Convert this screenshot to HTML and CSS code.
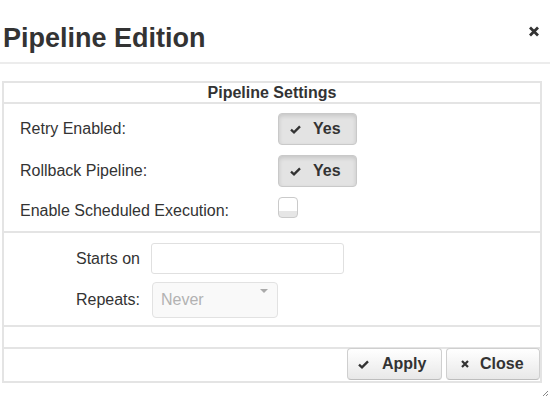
FILE: index.html
```html
<!DOCTYPE html>
<html>
<head>
<meta charset="utf-8">
<link rel="stylesheet" href="styles.css">
</head>
<body>
<div class="dialog">
  <div class="dialog-header">
    <h1 class="title">Pipeline Edition</h1>
    <svg class="close-x" width="12" height="11" viewBox="0 0 12 11"><path d="M2 1.5 L10 9.5 M10 1.5 L2 9.5" stroke="#333" stroke-width="2.8" fill="none"/></svg>
  </div>
  <div class="panel">
    <div class="panel-head">Pipeline Settings</div>
    <div class="settings">
      <div class="row">
        <span class="label">Retry Enabled:</span>
        <button class="toggle"><svg class="ico" width="11" height="9" viewBox="0 0 11 9"><path d="M1 4.6 L4 7.4 L10 1.4" stroke="#333" stroke-width="2.3" fill="none"/></svg><span>Yes</span></button>
      </div>
      <div class="row">
        <span class="label">Rollback Pipeline:</span>
        <button class="toggle"><svg class="ico" width="11" height="9" viewBox="0 0 11 9"><path d="M1 4.6 L4 7.4 L10 1.4" stroke="#333" stroke-width="2.3" fill="none"/></svg><span>Yes</span></button>
      </div>
      <div class="row row-check">
        <span class="label label-check">Enable Scheduled Execution:</span>
        <span class="checkbox"></span>
      </div>
    </div>
    <div class="schedule">
      <span class="slabel">Starts on</span>
      <span class="input"></span>
      <span class="slabel">Repeats:</span>
      <span class="select"><span class="select-text">Never</span><span class="caret"></span></span>
    </div>
    <div class="spacer"></div>
    <div class="footer">
      <button class="btn btn-apply"><svg class="ico" width="11" height="9" viewBox="0 0 11 9"><path d="M1 4.6 L4 7.4 L10 1.4" stroke="#333" stroke-width="2.3" fill="none"/></svg><span>Apply</span></button>
      <button class="btn btn-close"><svg class="ico" width="8" height="8" viewBox="0 0 8 8"><path d="M1 1 L7 7 M7 1 L1 7" stroke="#333" stroke-width="2.2" fill="none"/></svg><span>Close</span></button>
    </div>
  </div>
  <svg class="grip" width="8" height="8" viewBox="0 0 8 8"><path d="M7 2 L2 7 M7 5 L5 7" stroke="#888" stroke-width="1" fill="none"/></svg>
</div>
</body>
</html>
```

FILE: styles.css
```css
* { box-sizing: border-box; }
html, body { margin: 0; padding: 0; background: #fff; }
body {
  font-family: "Liberation Sans", Arial, Helvetica, sans-serif;
  color: #333;
  width: 550px;
  height: 400px;
  overflow: hidden;
}
.dialog { position: relative; width: 550px; height: 400px; }
.dialog-header {
  height: 64px;
  padding: 25px 0 0 3px;
  border-bottom: 2px solid #ececec;
  display: flex;
  align-items: flex-start;
}
.title {
  margin: 0;
  font-size: 27px;
  line-height: 27px;
  font-weight: bold;
  color: #333;
}
.close-x { margin-left: auto; margin-right: 10px; margin-top: 1px; }
.panel {
  margin: 17px 0 0 2px;
  width: 540px;
  border: 2px solid #e4e4e4;
  display: flex;
  flex-direction: column;
}
.panel-head {
  height: 21px;
  line-height: 19px;
  text-align: center;
  font-weight: bold;
  font-size: 16px;
  border-bottom: 2px solid #e4e4e4;
}
.settings {
  padding: 9px 0 13px 16px;
  border-bottom: 2px solid #e4e4e4;
  display: flex;
  flex-direction: column;
  gap: 10px;
}
.row { display: flex; align-items: center; height: 32px; }
.row-check { height: 21px; }
.label { width: 258px; font-size: 16px; line-height: 18px; }
.label-check { padding-top: 6px; }
.toggle {
  width: 79px;
  height: 32px;
  margin: 0;
  padding: 0 0 0 11px;
  display: flex;
  align-items: center;
  gap: 12px;
  background: #e3e3e3;
  border: 1px solid #c9c9c9;
  border-radius: 4px;
  box-shadow: inset 0 2px 4px rgba(0,0,0,0.13);
  font-family: inherit;
  font-size: 16px;
  font-weight: bold;
  color: #333;
}
.checkbox {
  width: 20px;
  height: 21px;
  border: 1px solid #cacaca;
  border-radius: 4px;
  background: linear-gradient(#fff 0, #fff 66%, #e6e6e6 70%, #e6e6e6 100%);
}
.schedule {
  display: grid;
  grid-template-columns: 136px auto;
  column-gap: 11px;
  row-gap: 8px;
  align-items: center;
  justify-items: start;
  padding: 10px 0 7px 0;
  border-bottom: 2px solid #e4e4e4;
}
.slabel { justify-self: end; font-size: 16px; }
.input {
  width: 193px;
  height: 31px;
  border: 1px solid #e0e0e0;
  border-radius: 3px;
  background: #fff;
}
.select {
  margin-left: 1px;
  width: 126px;
  height: 36px;
  border: 1px solid #e2e2e2;
  border-radius: 4px;
  background: #f9f9f9;
  display: flex;
  align-items: center;
  padding: 0 0 0 8px;
}
.select-text { font-size: 16px; color: #b2b2b2; }
.caret {
  margin-left: auto;
  margin-right: 9px;
  align-self: flex-start;
  margin-top: 6px;
  width: 0;
  height: 0;
  border-left: 4px solid transparent;
  border-right: 4px solid transparent;
  border-top: 4px solid #aaa;
}
.spacer { height: 22px; border-bottom: 2px solid #e4e4e4; }
.footer {
  height: 32px;
  display: flex;
  justify-content: flex-end;
  gap: 4px;
}
.btn {
  height: 32px;
  margin: -1px 0 0 0;
  display: flex;
  align-items: center;
  background: linear-gradient(#ffffff, #e8e8e8);
  border: 1px solid #cfcfcf;
  border-bottom-color: #bdbdbd;
  border-radius: 4px;
  font-family: inherit;
  font-size: 16px;
  font-weight: bold;
  color: #333;
}
.btn-apply { width: 95px; padding: 0 0 0 10px; gap: 13px; }
.btn-close { width: 94px; padding: 0 0 0 14px; gap: 11px; }
.ico { flex: none; }
.grip { position: absolute; left: 541px; top: 389px; }
```
